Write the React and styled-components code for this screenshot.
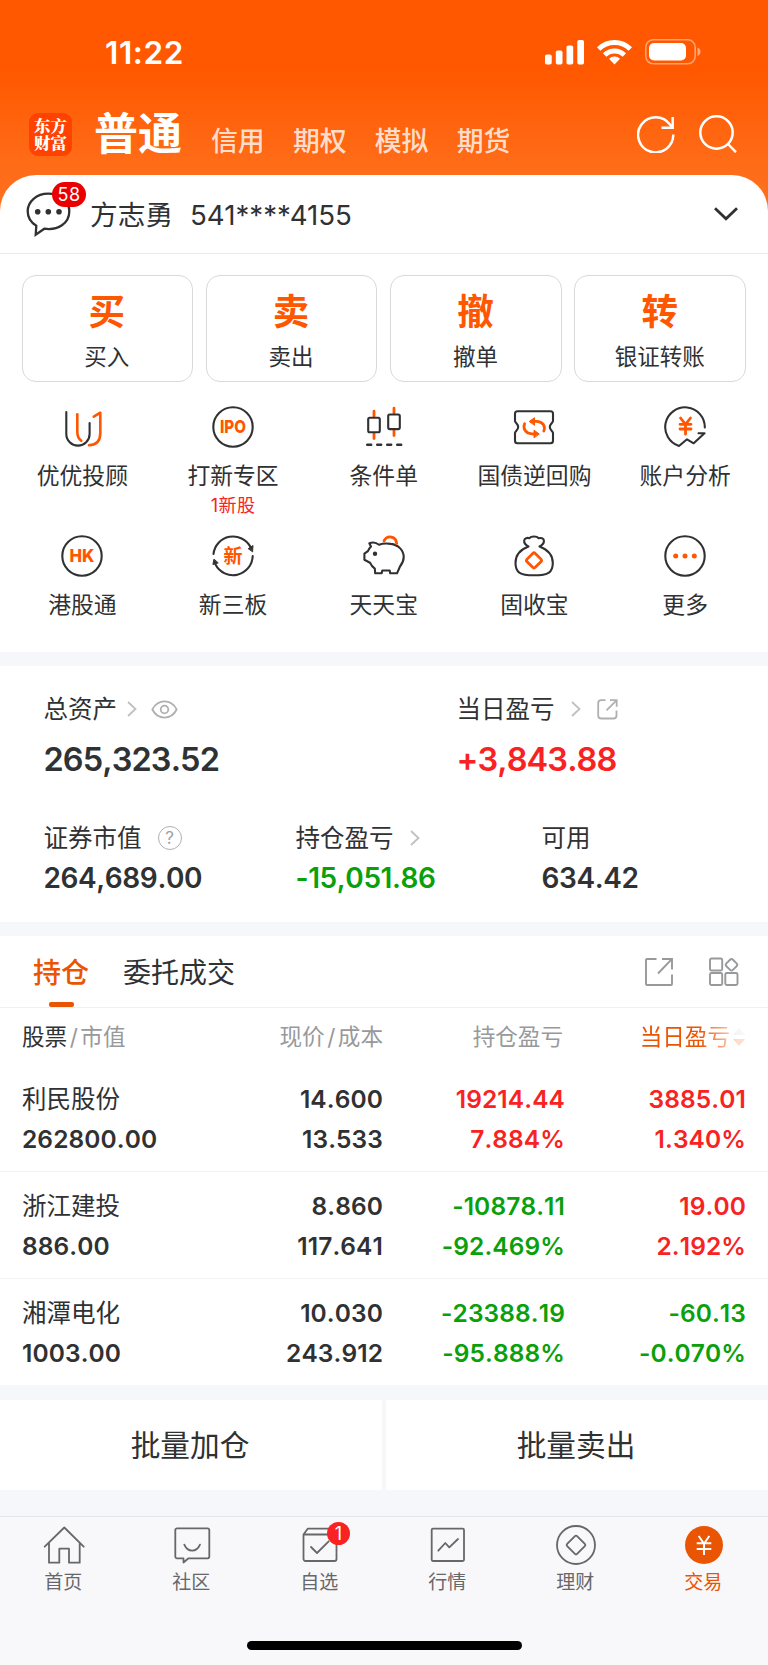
import React from 'react'
import styled, { createGlobalStyle } from 'styled-components'

const ORANGE = '#ff5600'
const DARK = '#303133'
const RED = '#f92222'
const GREEN = '#0aa00a'
const GRAY = '#666769'

const GlobalStyle = createGlobalStyle`
    * {
        box-sizing: border-box;
    }
    body {
        margin: 0;
        background: #f6f7fa;
        color: ${DARK};
        font-family: 'Inter', 'Noto Sans CJK SC', sans-serif;
    }
`;

/* ---------- icons ---------- */

const Icon = ({ size = 44, color = DARK, width = 2.1, children }) => (
    <svg width={size} height={size} viewBox='0 0 44 44' fill='none' stroke={color}
        strokeWidth={width} strokeLinecap='round' strokeLinejoin='round'>
        {children}
    </svg>
)

const IconText = ({ children, size = 18, y = 28.4, length, weight = 800 }) => (
    <text x='22' y={y} textAnchor='middle' fontSize={size} fontWeight={weight} fill={ORANGE} stroke='none'
        textLength={length} lengthAdjust='spacingAndGlyphs'>{children}</text>
)

const adviser = (
    <Icon>
        <path d='M6.300 7v22a11.600 11.600 0 0 0 23.300 0V18' />
        <g stroke={ORANGE} strokeWidth='2.6'>
            <path d='M17.300 9.300V27c0 4 1.600 7 4 8.800M29 40.300C36.300 40 40.300 35.500 40.300 28V7.700l-6.500 4' />
        </g>
    </Icon>
)
const ipo = <Icon><circle cx='22' cy='22' r='19.7' /><IconText length='26'>IPO</IconText></Icon>
const condition = (
    <Icon>
        <path stroke={ORANGE} strokeWidth='2.8' d='M12 6.200v5M12 28.500v5M32 3.200v5M32 25.500v5' />
        <rect x='6.2' y='12.7' width='11.6' height='14.6' rx='1.5' />
        <rect x='26.2' y='9.5' width='11.6' height='14.6' rx='1.5' />
        <path strokeWidth='2.4' d='M5.200 39.700h4M15.200 39.700h4M25.200 39.700h4M35.200 39.700h4' />
    </Icon>
)
const bond = (
    <Icon>
        <path d='M5.500 6.300h33a2.500 2.500 0 0 1 2.500 2.500v7.200c0 1.500-3.200 3-3.200 6s3.200 4.500 3.200 6v7.800a2.500 2.500 0 0 1-2.500 2.500h-33A2.500 2.500 0 0 1 3 35.800v-7.800c0-1.500 3.200-3 3.200-6s-3.200-4.500-3.200-6v-7.200a2.500 2.500 0 0 1 2.500-2.500z' />
        <g stroke={ORANGE} strokeWidth='2.8'>
            <path d='M20 16.300h4.500c6 0 9.500 5 7.300 9.700M24 28.800h-4c-6.300 0-9.500-5.300-7.400-10' />
            <path fill={ORANGE} strokeWidth='1' d='M17.500 16.300l5-3.600v7.200zM27 28.800l-5-3.600v7.200z' />
        </g>
    </Icon>
)
const analysis = (
    <Icon>
        <path d='M41.800 22.500A19.800 19.800 0 1 0 16 41l8-6.700 6.700 4L41.500 28.300h-6' />
        <path stroke={ORANGE} strokeWidth='2.8' d='M17.500 13l5 6.300 5-6.300M22.500 19.300v9.900M17 19.300h11M17 24h11' />
    </Icon>
)
const hk = <Icon><circle cx='22' cy='22' r='19.7' /><IconText length='25'>HK</IconText></Icon>
const newBoard = (
    <Icon>
        <path d='M2.5 20A19.7 19.7 0 0 1 39.5 13M41.7 22A19.7 19.7 0 0 1 4.5 30.5' />
        <path fill={DARK} strokeWidth='1' d='M37.5 14.5l4.5-3-.4 6zM2.9 25.5l-1 5 5-1.5z' />
        <IconText size={19} y={28.8} weight={700}>新</IconText>
    </Icon>
)
const piggy = (
    <Icon>
        <path d='M7.300 9.300c3.500-1.500 7-.8 9.700 1.400 3.500-1.200 7.500-1.500 11.700-.8 8 1 13 6.500 13 13.200 0 3.900-1.600 6.900-3.700 9.400L35 39.300h-6.800l-.5-2.800h-7.400l-.6 2.800h-6.500l-.4-4.600c-2-1.400-3.700-3.500-4.800-6l-5.600-3v-6l3.500-2.500c.6-1.700 1.600-3.300 3.100-4.800z' />
        <circle cx='13' cy='19.8' r='2.2' fill={DARK} stroke='none' />
        <path stroke={ORANGE} strokeWidth='2.8' d='M22 7c1.500-3 4-4.300 6.700-4 3.500.3 5.600 3 6 6.500' />
    </Icon>
)
const bag = (
    <Icon>
        <path d='M16.500 12.500c-3-1.500-4.500-3.800-4.300-6 .2-2.300 3-3 5.300-2.300 1.500-2.200 7.500-2.200 9 0 2.500-.7 5.200 0 5.400 2.300.2 2.200-1.300 4.500-4.400 6 8 3 13.300 9 13.300 16.500 0 9-4 12.300-18.700 12.300S3.500 38 3.500 29c0-7.500 5-13.500 13-16.500z' />
        <rect x='16.2' y='20.6' width='11.6' height='11.6' rx='1.8' transform='rotate(45 22 26.4)' stroke={ORANGE} strokeWidth='2.8' />
    </Icon>
)
const more = (
    <Icon>
        <circle cx='22' cy='22' r='19.7' />
        <g fill={ORANGE} stroke='none'>
            <circle cx='12.7' cy='22' r='2.5' />
            <circle cx='22' cy='22' r='2.5' />
            <circle cx='31.3' cy='22' r='2.5' />
        </g>
    </Icon>
)

const home = (
    <Icon color={GRAY} width={1.8}>
        <path d='M2.7 23.7L22.3 4.5l19.4 19.2M7 20v19.7h10.3v-14H27v14h10.7V20' />
    </Icon>
)
const community = (
    <Icon color={GRAY} width={1.8}>
        <path d='M7 5.300h30.600a1.700 1.700 0 0 1 1.700 1.700v26.600a1.700 1.700 0 0 1-1.700 1.700H18.500l-5 4.200v-4.200H7a1.700 1.700 0 0 1-1.700-1.700V7A1.700 1.700 0 0 1 7 5.300z' />
        <path d='M14.3 21.6c3.5 8 12.2 8 15.7 0' />
    </Icon>
)
const favorites = (
    <Icon color={GRAY} width={1.8}>
        <path d='M5.500 11.500h33V36a2 2 0 0 1-2 2h-29a2 2 0 0 1-2-2zM5.500 11.500l4.200-5.800h25l3.800 5.800M13 24l6 6 11.700-11.700' />
    </Icon>
)
const market = (
    <Icon color={GRAY} width={1.8}>
        <rect x='5.7' y='5.7' width='32.3' height='32.3' rx='1.2' />
        <path d='M12.300 27.700l7-7.700 4 4.300 8.700-8.300' />
    </Icon>
)
const wealth = (
    <Icon color={GRAY} width={1.8}>
        <circle cx='22' cy='22' r='19' />
        <rect x='15' y='15' width='14' height='14' rx='1.5' transform='rotate(45 22 22)' />
    </Icon>
)
const trade = (
    <Icon color='#fff' width={2}>
        <circle cx='22' cy='22' r='19' fill='#ea5504' stroke='none' />
        <path strokeLinecap='butt' d='M16.700 13l5.300 7.800 5.300-7.800M22 20.500V32M14.700 20.300h14.600M14.700 26h14.600' />
    </Icon>
)

const Arrow = () => (
    <svg width='10' height='16' viewBox='0 0 10 16' fill='none' stroke='#c0c0c2' strokeWidth='1.8'>
        <path d='M1 1l7.500 7L1 15' />
    </svg>
)

/* ---------- data ---------- */

const modes = ['信用', '期权', '模拟', '期货']

const actions = [
    { mark: '买', title: '买入' },
    { mark: '卖', title: '卖出' },
    { mark: '撤', title: '撤单' },
    { mark: '转', title: '银证转账' },
]

const functions = [
    { title: '优优投顾', icon: adviser },
    { title: '打新专区', icon: ipo, note: '1新股' },
    { title: '条件单', icon: condition },
    { title: '国债逆回购', icon: bond },
    { title: '账户分析', icon: analysis },
    { title: '港股通', icon: hk },
    { title: '新三板', icon: newBoard },
    { title: '天天宝', icon: piggy },
    { title: '固收宝', icon: bag },
    { title: '更多', icon: more },
]

const holdings = [
    { name: '利民股份', value: '262800.00', price: '14.600', cost: '13.533', profit: '19214.44', rate: '7.884%', day: '3885.01', dayRate: '1.340%' },
    { name: '浙江建投', value: '886.00', price: '8.860', cost: '117.641', profit: '-10878.11', rate: '-92.469%', day: '19.00', dayRate: '2.192%' },
    { name: '湘潭电化', value: '1003.00', price: '10.030', cost: '243.912', profit: '-23388.19', rate: '-95.888%', day: '-60.13', dayRate: '-0.070%' },
]

const menu = [
    { title: '首页', icon: home },
    { title: '社区', icon: community },
    { title: '自选', icon: favorites, badge: 1 },
    { title: '行情', icon: market },
    { title: '理财', icon: wealth },
    { title: '交易', icon: trade, active: true },
]

const tone = (text) => (text.startsWith('-') ? GREEN : RED)

/* ---------- sections ---------- */

function Header() {
    return (
        <HeaderStyled>
            <StatusBar>
                <Clock>11:22</Clock>
                <StatusIcons>
                    <svg width='39' height='25' viewBox='0 0 39 25' fill='#fff'>
                        <rect x='0' y='14.5' width='6.7' height='10' rx='1.8' />
                        <rect x='10.8' y='10.5' width='6.7' height='14' rx='1.8' />
                        <rect x='21.5' y='5.5' width='6.7' height='19' rx='1.8' />
                        <rect x='32.3' y='0' width='6.7' height='24.5' rx='1.8' />
                    </svg>
                    <svg width='35' height='25' viewBox='0 0 35 25' fill='none' stroke='#fff' strokeWidth='4.8'>
                        <path d='M1.7 9a22.5 22.5 0 0 1 31.6 0M7.6 15a14.2 14.2 0 0 1 19.8 0' />
                        <path fill='#fff' stroke='none' d='M12 18.8a8 8 0 0 1 11 0L17.5 24.6z' />
                    </svg>
                    <svg width='56' height='26' viewBox='0 0 56 26'>
                        <rect x='.8' y='.8' width='49.4' height='24' rx='7.5' fill='none' stroke='#fff' strokeOpacity='.45' strokeWidth='1.6' />
                        <rect x='4' y='4' width='37' height='17.5' rx='5' fill='#fff' />
                        <path d='M52.5 8.5c4 1.5 4 7 0 8.5z' fill='#fff' fillOpacity='.5' />
                    </svg>
                </StatusIcons>
            </StatusBar>
            <NavBar>
                <Logo><span>东方财富</span></Logo>
                <CurrentMode>普通</CurrentMode>
                <Modes>
                    {modes.map((mode) => <li key={mode}>{mode}</li>)}
                </Modes>
                <NavButtons>
                    <svg width='38' height='38' viewBox='0 0 38 38' fill='none' stroke='#fff' strokeWidth='2.5'>
                        <path d='M36.300 19.500A17.600 17.600 0 1 1 33 9.500l2.500 3' />
                        <path d='M35.700 2v10.700H24.500' />
                    </svg>
                    <svg width='38' height='38' viewBox='0 0 38 38' fill='none' stroke='#fff' strokeWidth='2.5'>
                        <circle cx='17.5' cy='17.5' r='16.2' />
                        <path d='M28.500 28.500l8.500 8.700' />
                    </svg>
                </NavButtons>
            </NavBar>
            <AccountBar>
                <Message>
                    <svg width='46' height='46' viewBox='0 0 46 46' fill='none' stroke={DARK} strokeWidth='2.3'>
                        <path d='M22.300 1.700C10.500 1.700 1.700 9.500 1.700 19.300c0 6 3.300 11.200 8.600 14.500l-.6 8.900 8.600-6C32 38.700 43.300 31.500 43.300 19.300c0-9.800-9-17.600-21-17.600z' />
                        <g fill={DARK} stroke='none'>
                            <circle cx='11.7' cy='19.7' r='2.8' />
                            <circle cx='22.3' cy='19.7' r='2.8' />
                            <circle cx='33' cy='19.7' r='2.8' />
                        </g>
                    </svg>
                    <Count>58</Count>
                </Message>
                <Owner>方志勇</Owner>
                <Account>541****4155</Account>
                <svg width='24' height='14' viewBox='0 0 24 14' fill='none' stroke={DARK} strokeWidth='2.8'>
                    <path d='M1 1.200l11 10.600L23 1.200' />
                </svg>
            </AccountBar>
        </HeaderStyled>
    )
}

function Assets() {
    return (
        <AssetsStyled>
            <AssetRow $columns='413px 1fr' $height='128.5px'>
                <Asset $big>
                    <h4>总资产
                        <Arrow />
                        <svg className='extra' width='27' height='19' viewBox='0 0 28 20' fill='none' stroke='#b0b0b2' strokeWidth='1.9'>
                            <path d='M1.200 10C7-1.300 21-1.300 26.800 10 21 21.300 7 21.300 1.200 10z' />
                            <circle cx='14' cy='10' r='4' />
                        </svg>
                    </h4>
                    <strong>265,323.52</strong>
                </Asset>
                <Asset $big $color={RED}>
                    <h4>当日盈亏
                        <Arrow />
                        <svg className='extra' width='21' height='21' viewBox='0 0 21 21' fill='none' stroke='#b0b0b2' strokeWidth='1.8'>
                            <path d='M8.500 1.200H4.200a3 3 0 0 0-3 3v12.300a3 3 0 0 0 3 3h12.300a3 3 0 0 0 3-3v-5M13 1.200h6.700v6.500M19.500 1.300L9.500 11.300' />
                        </svg>
                    </h4>
                    <strong>+3,843.88</strong>
                </Asset>
            </AssetRow>
            <AssetRow $columns='252px 246px 1fr'>
                <Asset>
                    <h4>证券市值
                        <Help>?</Help>
                    </h4>
                    <strong>264,689.00</strong>
                </Asset>
                <Asset $color={GREEN}>
                    <h4>持仓盈亏 <Arrow /></h4>
                    <strong>-15,051.86</strong>
                </Asset>
                <Asset>
                    <h4>可用</h4>
                    <strong>634.42</strong>
                </Asset>
            </AssetRow>
        </AssetsStyled>
    )
}

function Holdings() {
    return (
        <HoldingsStyled>
            <Tabs>
                <Tab $active>持仓</Tab>
                <Tab>委托成交</Tab>
                <TabTools>
                    <svg width='28' height='28' viewBox='0 0 28 28' fill='none' stroke='#98999b' strokeWidth='1.9'>
                        <path d='M11.500 1H2a1 1 0 0 0-1 1v24a1 1 0 0 0 1 1h24a1 1 0 0 0 1-1V16.500M17 1h10v10.500M26.800 1.200L13 15.500' />
                    </svg>
                    <svg width='30' height='29' viewBox='0 0 30 29' fill='none' stroke='#98999b' strokeWidth='1.9'>
                        <rect x='1' y='1.5' width='12.2' height='12' rx='1.5' />
                        <rect x='1' y='16' width='12.2' height='12' rx='1.5' />
                        <rect x='16.3' y='16' width='12.2' height='12' rx='1.5' />
                        <rect x='17.9' y='3.2' width='9.2' height='9.2' rx='2' transform='rotate(45 22.5 7.8)' />
                    </svg>
                </TabTools>
            </Tabs>
            <TableHead>
                <span><b>股票</b><i>/</i>市值</span>
                <span>现价<i>/</i>成本</span>
                <span>持仓盈亏</span>
                <SortCell>
                    当日盈亏
                    <svg width='14' height='22' viewBox='0 0 14 22'>
                        <path d='M7 2l6 7H1z' fill='#ccd0d8' />
                        <path d='M7 20l6-7H1z' fill={ORANGE} />
                    </svg>
                </SortCell>
            </TableHead>
            {holdings.map((item) => (
                <Row key={item.name}>
                    <Cell><Name>{item.name}</Name><span>{item.value}</span></Cell>
                    <Cell><span>{item.price}</span><span>{item.cost}</span></Cell>
                    <Cell $color={tone(item.profit)}><span>{item.profit}</span><span>{item.rate}</span></Cell>
                    <Cell $color={tone(item.day)}><span>{item.day}</span><span>{item.dayRate}</span></Cell>
                </Row>
            ))}
        </HoldingsStyled>
    )
}

function App() {
    return (
        <Page>
            <GlobalStyle />
            <Header />
            <Panel>
                <Actions>
                    {actions.map((item) => (
                        <Action key={item.title}>
                            <strong>{item.mark}</strong>
                            <span>{item.title}</span>
                        </Action>
                    ))}
                </Actions>
                <Functions>
                    {functions.map((item) => (
                        <li key={item.title}>
                            {item.icon}
                            <span>{item.title}</span>
                            {item.note && <em>{item.note}</em>}
                        </li>
                    ))}
                </Functions>
            </Panel>
            <Assets />
            <Holdings />
            <Batch>
                <button>批量加仓</button>
                <button>批量卖出</button>
            </Batch>
            <BottomNav>
                <ul>
                    {menu.map((item) => (
                        <MenuItem key={item.title} $active={item.active}>
                            {item.icon}
                            <span>{item.title}</span>
                            {item.badge && <Badge>{item.badge}</Badge>}
                        </MenuItem>
                    ))}
                </ul>
                <HomeBar />
            </BottomNav>
        </Page>
    )
}

/* ---------- styles ---------- */

const Page = styled.div`
    width: 768px;
    height: 1665px;
    display: flex;
    flex-direction: column;
    overflow: hidden;
    ul{
        list-style: none;
        margin: 0;
        padding: 0;
    }
`;

const HeaderStyled = styled.header`
    background: linear-gradient(#ff5800 0, #ff5800 70px, #ff6c18 165px, #ff7020 215px);
`;

const StatusBar = styled.div`
    height: 105px;
    padding: 0 67px 0 105px;
    display: flex;
    align-items: center;
    justify-content: space-between;
`;

const Clock = styled.span`
    color: white;
    font-size: 31.5px;
    font-weight: 600;
    letter-spacing: .6px;
`;

const StatusIcons = styled.div`
    display: flex;
    align-items: center;
    gap: 13px;
    padding-bottom: 1px;
`;

const NavBar = styled.nav`
    height: 70px;
    padding: 0 31px 11px 29px;
    display: flex;
    align-items: center;
`;

const Logo = styled.div`
    width: 43px;
    height: 43px;
    padding: 4px 5px;
    border-radius: 9px;
    background: #ff4200;
    color: white;
    font-family: 'Noto Serif CJK SC', 'Noto Sans CJK SC', sans-serif;
    font-size: 16.4px;
    font-weight: 900;
    line-height: 17px;
    word-break: break-all;
`;

const CurrentMode = styled.h1`
    margin: 0 0 2px 22px;
    width: 89px;
    color: white;
    font-size: 44px;
    line-height: 50px;
    font-weight: 700;
`;

const Modes = styled.ul`
    display: flex;
    flex: 1;
    gap: 28.3px;
    && {
        padding: 12px 0 0 28px;
    }
    color: rgba(255, 255, 255, .8);
    font-size: 26.8px;
    line-height: 30px;
    font-weight: 500;
`;

const NavButtons = styled.div`
    display: flex;
    gap: 24px;
    padding-bottom: 1px;
`;

const AccountBar = styled.div`
    height: 79px;
    padding: 0 30px 0 26px;
    display: flex;
    align-items: center;
    background: white;
    border-bottom: 1px solid #ececee;
    border-radius: 36px 36px 0 0;
    font-size: 27.7px;
`;

const Message = styled.div`
    position: relative;
    height: 46px;
    margin-top: 1px;
`;

const Count = styled.span`
    position: absolute;
    left: 26px;
    top: -10px;
    width: 34px;
    height: 25px;
    border-radius: 13px;
    background: #ea0000;
    color: white;
    font-size: 18px;
    line-height: 26px;
    text-align: center;
    letter-spacing: .4px;
`;

const Owner = styled.span`
    margin-left: 18px;
    width: 100px;
    padding-bottom: 2px;
`;

const Account = styled.span`
    flex: 1;
    padding-top: 2px;
`;

const Panel = styled.section`
    height: 398px;
    background: white;
`;

const Actions = styled.div`
    display: grid;
    grid-template-columns: repeat(4, 1fr);
    gap: 12.6px;
    padding: 21px 22px 0 21.5px;
`;

const Action = styled.button`
    height: 107px;
    padding: 15px 1px 0 0;
    display: flex;
    flex-direction: column;
    align-items: center;
    background: white;
    border: 1.4px solid #d9d9db;
    border-radius: 14px;
    font-family: inherit;
    color: ${DARK};
    strong{
        color: ${ORANGE};
        font-size: 36.5px;
        line-height: 43px;
        font-weight: 700;
    }
    span{
        margin-top: 8px;
        font-size: 22.5px;
        line-height: 30px;
    }
`;

const Functions = styled.ul`
    display: grid;
    grid-template-columns: repeat(5, 1fr);
    grid-auto-rows: 128.7px;
    && {
        padding: 23px 7.500px 0 7px;
    }
    li{
        display: flex;
        flex-direction: column;
        align-items: center;
    }
    span{
        margin-top: 12px;
        font-size: 22.8px;
        line-height: 30px;
    }
    em{
        color: ${RED};
        font-style: normal;
        font-size: 18px;
        line-height: 30px;
        letter-spacing: .5px;
    }
`;

const AssetsStyled = styled.section`
    height: 256px;
    margin-top: 14px;
    padding: 28px 44px 0 43.5px;
    background: white;
`;

const AssetRow = styled.div`
    display: grid;
    grid-template-columns: ${(props) => props.$columns};
    height: ${(props) => props.$height || 'auto'};
`;

const Asset = styled.div`
    h4{
        margin: 0;
        height: 30px;
        display: flex;
        align-items: center;
        font-size: 24.5px;
        line-height: 30px;
        font-weight: 400;
    }
    h4 > svg:first-of-type{
        margin-left: ${(props) => (props.$big && !props.$color ? 10 : 16)}px;
    }
    h4 > .extra{
        margin-left: ${(props) => (props.$color ? 16 : 14)}px;
    }
    strong{
        display: block;
        margin-top: ${(props) => (props.$big ? 16 : 5)}px;
        color: ${(props) => props.$color || DARK};
        font-size: ${(props) => (props.$big ? 32.5 : 28)}px;
        line-height: 40px;
        font-weight: 600;
        letter-spacing: ${(props) => (props.$big ? -.9 : -.4)}px;
        font-kerning: none;
    }
`;

const Help = styled.i`
    width: 24px;
    height: 24px;
    margin-left: 16px;
    border: 1.8px solid #b0b0b2;
    border-radius: 50%;
    color: #a0a0a2;
    font-size: 17px;
    line-height: 22px;
    font-style: normal;
    text-align: center;
`;

const HoldingsStyled = styled.section`
    height: 449px;
    margin-top: 14px;
    background: white;
`;

const Tabs = styled.div`
    height: 72px;
    padding: 0 29px 0 33px;
    display: flex;
    border-bottom: 1px solid #f0f0f2;
`;

const Tab = styled.div`
    display: flex;
    flex-direction: column;
    align-items: center;
    padding-top: 8px;
    margin-right: 34px;
    color: ${(props) => (props.$active ? '#ea5504' : DARK)};
    font-size: 28px;
    font-weight: ${(props) => (props.$active ? 500 : 400)};
    line-height: 58px;
    &::after{
        content: "";
        width: 25px;
        height: 5px;
        border-radius: 2px;
        background: ${(props) => (props.$active ? '#ea5504' : 'transparent')};
    }
`;

const TabTools = styled.div`
    flex: 1;
    height: 71px;
    display: flex;
    align-items: center;
    justify-content: flex-end;
    gap: 36px;
`;

const columns = '1fr 150px 182px 181px';

const TableHead = styled.div`
    display: grid;
    grid-template-columns: ${columns};
    height: 57px;
    padding: 0 22px;
    color: #98999b;
    font-size: 22.6px;
    line-height: 57px;
    > span{
        text-align: right;
    }
    > span:first-child{
        text-align: left;
    }
    > span:nth-child(3){
        padding-right: 2px;
    }
    b{
        font-weight: 400;
        color: ${DARK};
    }
    i{
        font-style: normal;
        padding: 0 2.5px;
    }
`;

const SortCell = styled.span`
    display: flex;
    align-items: center;
    justify-content: flex-end;
    gap: 2px;
    color: #ea5504;
    mask-image: linear-gradient(to right, #000 74%, rgba(0, 0, 0, .2) 95%);
`;

const Row = styled.div`
    display: grid;
    grid-template-columns: ${columns};
    height: 107px;
    padding: 14px 22px 0;
    border-bottom: 1px solid #f1f2f4;
    &:last-child{
        border-bottom: none;
    }
`;

const Cell = styled.div`
    display: flex;
    flex-direction: column;
    align-items: flex-end;
    color: ${(props) => props.$color || DARK};
    font-size: 24.5px;
    font-weight: 600;
    line-height: 40px;
    letter-spacing: .1px;
    font-kerning: none;
    &:first-child{
        align-items: flex-start;
    }
`;

const Name = styled.span`
    font-weight: 400;
    letter-spacing: 0;
`;

const Batch = styled.div`
    display: grid;
    grid-template-columns: 1fr 1fr;
    gap: 4px;
    height: 90px;
    margin-top: 14.5px;
    button{
        border: none;
        padding: 0 2px 2px 0;
        background: white;
        color: ${DARK};
        font-family: inherit;
        font-size: 29.7px;
    }
`;

const BottomNav = styled.footer`
    flex: 1;
    margin-top: 26px;
    background: #f8f8fb;
    border-top: 1px solid #e4e5e9;
    ul{
        display: grid;
        grid-template-columns: repeat(6, 1fr);
        height: 124px;
        padding-top: 6px;
    }
`;

const MenuItem = styled.li`
    position: relative;
    display: flex;
    flex-direction: column;
    align-items: center;
    color: ${(props) => (props.$active ? '#ea5504' : GRAY)};
    font-size: 19px;
    span{
        margin-top: 3.5px;
        padding-right: 1.5px;
        line-height: 26px;
    }
`;

const Badge = styled.b`
    position: absolute;
    left: 71px;
    top: -1px;
    width: 23px;
    height: 23px;
    border-radius: 50%;
    background: ${RED};
    color: white;
    font-size: 18px;
    font-weight: 400;
    line-height: 23px;
    text-align: center;
`;

const HomeBar = styled.div`
    width: 275px;
    height: 9px;
    margin: 0 auto;
    border-radius: 5px;
    background: black;
`;

export default App;
